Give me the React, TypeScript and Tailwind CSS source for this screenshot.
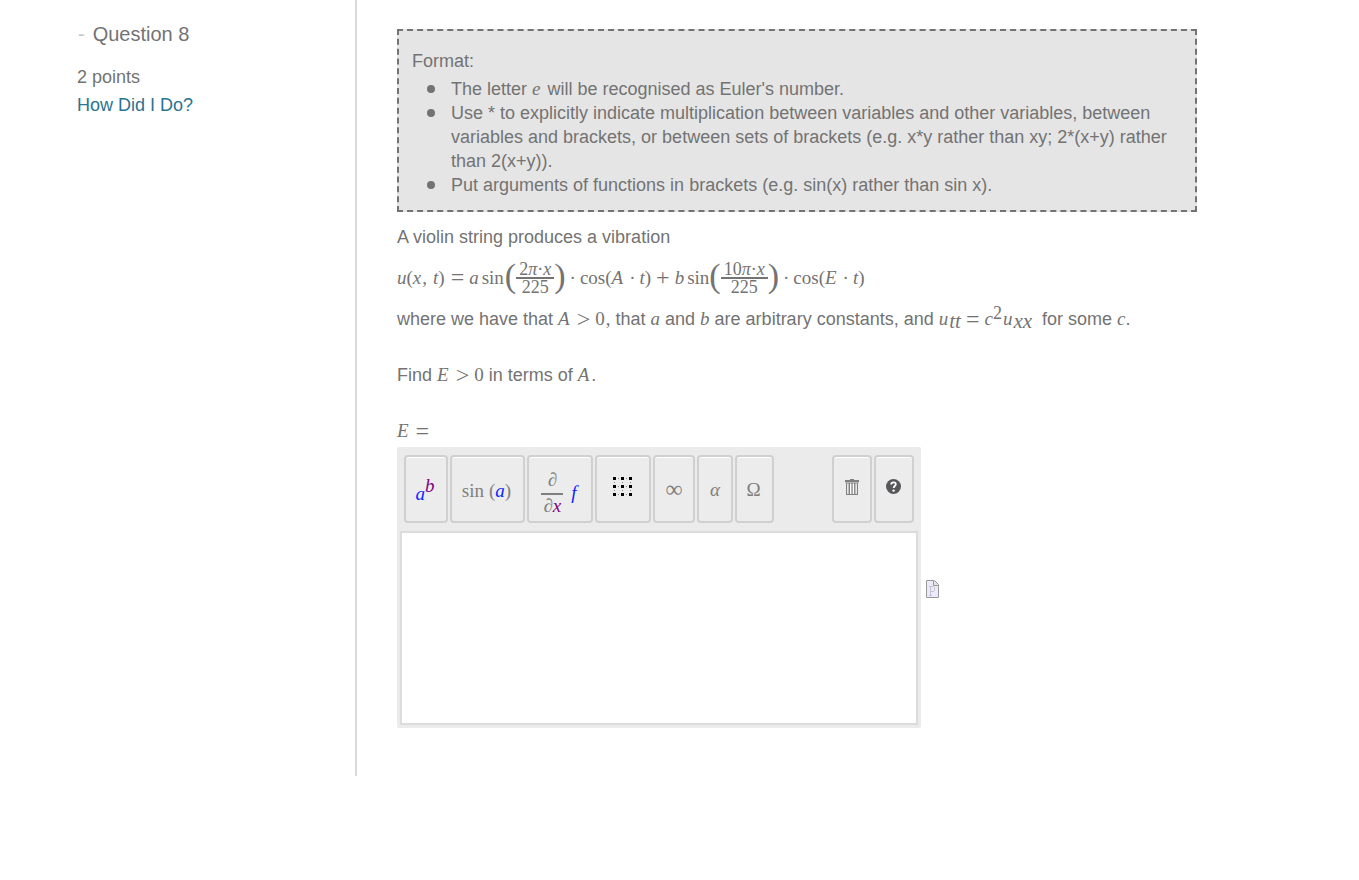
import React from "react";
import clsx from "clsx";

type ChildrenProps = {
  children: React.ReactNode;
  className?: string;
};

const Var = ({ children, className }: ChildrenProps) => (
  <i className={clsx("font-['Liberation_Serif',serif] text-[19px] leading-none", className)}>
    {children}
  </i>
);

const Rm = ({ children, className }: ChildrenProps) => (
  <span className={clsx("font-['Liberation_Serif',serif] text-[19px] leading-none", className)}>
    {children}
  </span>
);

// relations and sums are drawn wider than the letters round them
const Rel = ({ children }: ChildrenProps) => (
  <span className="mx-[5px] inline-block align-[-2px] font-['Liberation_Serif',serif] text-[24px] leading-none">
    {children}
  </span>
);

const Sub = ({ children }: ChildrenProps) => (
  <sub className="relative top-[3px] align-baseline font-['Liberation_Serif',serif] text-[21px] leading-none italic">
    {children}
  </sub>
);

const Sup = ({ children }: ChildrenProps) => (
  <sup className="relative -top-1.5 mr-px align-baseline font-['Liberation_Serif',serif] text-[18px] leading-none">
    {children}
  </sup>
);

const BigParen = ({ children }: ChildrenProps) => (
  <span className="pb-0.5 font-['Liberation_Serif',serif] text-[34px] leading-8">{children}</span>
);

const Fraction = ({ top, bottom }: { top: React.ReactNode; bottom: string }) => (
  <span className="flex items-center">
    <BigParen>(</BigParen>
    <span className="flex flex-col pt-0.5 text-center font-['Liberation_Serif',serif] text-[18px] leading-4">
      <span className="border-b-2 border-[#737373] px-[3px]">{top}</span>
      <span>{bottom}</span>
    </span>
    <BigParen>)</BigParen>
  </span>
);

const ToolButton = ({
  label,
  children,
  className,
}: ChildrenProps & { label: string }) => (
  <button
    type="button"
    aria-label={label}
    className={clsx(
      "flex h-[68px] items-center justify-center rounded border-2 border-[#d0d0d0] bg-[#ececec] text-[#808080] shadow-[inset_0_1px_0_#fff]",
      className
    )}
  >
    {children}
  </button>
);

const Bullet = ({ children }: ChildrenProps) => (
  <li className="flex">
    <span className="mt-2 mr-4 ml-[15px] size-2 shrink-0 rounded-full bg-[#737373]" />
    <span>{children}</span>
  </li>
);

const MatrixIcon = () => (
  <svg width="19" height="19" viewBox="0 0 19 19" shapeRendering="crispEdges">
    {[0, 8, 16].map((y) =>
      [0, 8, 16].map((x) => (
        <rect key={`${x}-${y}`} x={x} y={y} width="3" height="3" fill="#000" />
      ))
    )}
    {[1, 9, 17].map((a) =>
      [5, 13].map((b) => (
        <g key={`${a}-${b}`} fill="#888">
          <rect x={b} y={a} width="1" height="1" />
          <rect x={a} y={b} width="1" height="1" />
        </g>
      ))
    )}
  </svg>
);

const TrashIcon = () => (
  <svg width="14" height="16" viewBox="0 0 14 16">
    <path d="M5 0h4v1h5v2.6H0V1h5z" fill="#808080" />
    <path d="M1 4h12v12H1z" fill="#808080" />
    <path d="M2.2 4.5h1.3V15H2.2zM5 4.5h1.4V15H5zM7.7 4.5h1.4V15H7.7zM10.5 4.5h1.3V15h-1.3z" fill="#fff" />
  </svg>
);

const HelpIcon = () => (
  <svg width="15" height="15" viewBox="0 0 15 15">
    <circle cx="7.5" cy="7.5" r="7.5" fill="#58585b" />
    <path
      d="M5.2 5.6C5.2 2.6 9.9 2.7 9.8 5.3C9.8 7 7.7 7.1 7.7 9.1"
      fill="none"
      stroke="#fff"
      strokeWidth="1.8"
    />
    <circle cx="7.6" cy="11.6" r="1.2" fill="#fff" />
  </svg>
);

const PreviewIcon = () => (
  <svg width="13" height="18" viewBox="0 0 13 18">
    <path d="M.5.5h8l4 4v13H.5z" fill="#ebe9fa" stroke="#999" />
    <path d="M7.5.5v5h5" fill="#e2e2e2" stroke="#999" />
    <path d="M3 6.5h4.5l1 1v3l-1 1H4.5M4.5 6.5v9M3 15.5h3" fill="none" stroke="#c4c2cc" />
  </svg>
);

const Sidebar = () => (
  <aside className="w-[357px] shrink-0 border-r-2 border-[#d9d9d9] pt-5 pl-[77px] leading-7">
    <h2 className="flex gap-2 text-[20px]">
      <span className="pl-px text-[#c4c4c4]">-</span>
      Question 8
    </h2>
    <p className="mt-[15px]">2 points</p>
    <a href="#feedback" className="text-[#2a7391]">
      How Did I Do?
    </a>
  </aside>
);

const FormatNotes = () => (
  <section className="max-w-[800px] border-2 border-dashed border-[#737373] bg-[#e5e5e5] px-[13px] pt-[18px] pb-[13px] leading-6">
    <p className="mb-1">Format:</p>
    <ul>
      <Bullet>
        The letter <Var className="mr-0.5">e</Var> will be recognised as Euler's number.
      </Bullet>
      <Bullet>
        Use * to explicitly indicate multiplication between variables and other
        variables, between variables and brackets, or between sets of brackets
        (e.g. x*y rather than xy; 2*(x+y) rather than 2(x+y)).
      </Bullet>
      <Bullet>
        Put arguments of functions in brackets (e.g. sin(x) rather than sin x).
      </Bullet>
    </ul>
  </section>
);

const Equation = () => (
  <div className="flex h-[54px] items-center pb-0.5 whitespace-nowrap">
    <Var>u</Var>
    <Rm>(</Rm>
    <Var className="mr-px">x</Var>
    <Rm className="mr-1.5">,</Rm>
    <Var>t</Var>
    <Rm className="mr-px">)</Rm>
    <Rel>=</Rel>
    <Var className="mr-[3px]">a</Var>
    <Rm className="mr-px">sin</Rm>
    <Fraction top={<>2<i>π</i>·<i>x</i></>} bottom="225" />
    <Rm className="mx-1">·</Rm>
    <Rm>cos(</Rm>
    <Var className="mr-0.5">A</Var>
    <Rm className="mx-1">·</Rm>
    <Var>t</Var>
    <Rm>)</Rm>
    <Rel>+</Rel>
    <Var className="mr-[3px]">b</Var>
    <Rm>sin</Rm>
    <Fraction top={<>10<i>π</i>·<i>x</i></>} bottom="225" />
    <Rm className="mx-1">·</Rm>
    <Rm>cos(</Rm>
    <Var className="mr-0.5">E</Var>
    <Rm className="mx-1">·</Rm>
    <Var>t</Var>
    <Rm>)</Rm>
  </div>
);

const EquationEditor = () => (
  <div className="flex items-center gap-[5px]">
    <div className="w-full max-w-[524px] rounded-xs bg-[#ebebeb] px-[3px] pt-2 pb-[3px]">
      <div className="mb-2 flex gap-0.5 px-1">
        <ToolButton label="Power" className="w-11 pr-0.5">
          <Var className="mt-2 text-[#0a24ff]">a</Var>
          <Var className="mb-2 text-[#800080]">b</Var>
        </ToolButton>
        <ToolButton label="Functions" className="w-[75px] pt-0.5 pr-0.5">
          <Rm className="mr-[5px]">sin</Rm>
          <Rm>(</Rm>
          <Var className="text-[#0a24ff]">a</Var>
          <Rm>)</Rm>
        </ToolButton>
        <ToolButton label="Derivatives" className="w-[66px] gap-2 pt-1.5 pr-0.5">
          <span className="flex flex-col text-center">
            <Var className="border-b-2 border-[#808080] pb-1">∂</Var>
            <span className="px-0.5 pt-px leading-none">
              <Var>∂</Var>
              <Var className="text-[#800080]">x</Var>
            </span>
          </span>
          <Var className="text-[#0a24ff]">f</Var>
        </ToolButton>
        <ToolButton label="Matrices" className="w-14 pr-0.5 pb-1.5">
          <MatrixIcon />
        </ToolButton>
        <ToolButton label="Symbols" className="w-[42px]">
          <span className="font-['Liberation_Serif',serif] text-[24px] leading-none">∞</span>
        </ToolButton>
        <ToolButton label="Lowercase Greek" className="w-9">
          <Var>α</Var>
        </ToolButton>
        <ToolButton label="Uppercase Greek" className="w-[39px] pr-0.5">
          <Rm>Ω</Rm>
        </ToolButton>
        <ToolButton label="Clear" className="ml-auto w-10 pb-1">
          <TrashIcon />
        </ToolButton>
        <ToolButton label="Help" className="w-10 pr-0.5 pb-1.5">
          <HelpIcon />
        </ToolButton>
      </div>
      <textarea
        aria-label="Value of E"
        className="block h-[194px] w-full resize-none border-2 border-[#dcdcdc] bg-white p-2 outline-none"
      />
    </div>
    <button type="button" aria-label="Preview" className="pt-0.5">
      <PreviewIcon />
    </button>
  </div>
);

const App = () => {
  return (
    <div className="flex bg-white font-['Liberation_Sans',Arial,sans-serif] text-[18px] text-[#737373]">
      <Sidebar />
      <main className="min-w-0 flex-1 px-10 pt-[29px] pb-12">
        <FormatNotes />
        <div className="pt-[11px] leading-7">
          <p>A violin string produces a vibration</p>
          <Equation />
          <p className="mb-7">
            where we have that <Var className="mr-0.5">A</Var>
            <Rel>&gt;</Rel>
            <Rm>0</Rm>
            <Rm className="ml-px">,</Rm> that <Var>a</Var> and <Var>b</Var> are
            arbitrary constants, and <Var className="mr-px">u</Var>
            <Sub>tt</Sub>
            <Rel>=</Rel>
            <Var>c</Var>
            <Sup>2</Sup>
            <Var className="mr-px">u</Var>
            <Sub>xx</Sub>&nbsp; for some <Var>c</Var>.
          </p>
          <p className="mb-7">
            Find <Var className="mr-0.5">E</Var>
            <Rel>&gt;</Rel>
            <Rm>0</Rm> in terms of <Var className="mr-0.5">A</Var>.
          </p>
          <p className="mb-0.5">
            <Var className="mr-0.5">E</Var>
            <Rel>=</Rel>
          </p>
        </div>
        <EquationEditor />
      </main>
    </div>
  );
};

export default App;
